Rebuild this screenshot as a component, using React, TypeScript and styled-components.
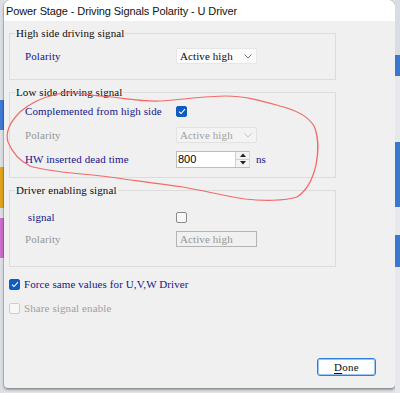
import styled, { createGlobalStyle } from "styled-components";

const GlobalStyle = createGlobalStyle`
  html, body {
    margin: 0;
    padding: 0;
    background: #dfe3e8;
    width: 400px;
    height: 393px;
    overflow: hidden;
  }
`;

const Screen = styled.div`
  position: relative;
  width: 400px;
  height: 393px;
  display: flex;
  background: #e4e6ea;
`;

const SideStrip = styled.div<{ $w: number }>`
  width: ${(p) => p.$w}px;
  flex: none;
  display: flex;
  flex-direction: column;
`;

const StripBit = styled.div<{ $h: number; $c: string }>`
  height: ${(p) => p.$h}px;
  background: ${(p) => p.$c};
  flex: none;
`;

const Dialog = styled.div`
  width: 391px;
  height: 388px;
  flex: none;
  display: flex;
  flex-direction: column;
  background: #f0f0f0;
  border-radius: 7px 7px 4px 4px;
  box-shadow: 0 2px 3px rgba(0, 0, 0, 0.35), 0 0 0 1px rgba(0, 0, 0, 0.12);
  overflow: hidden;
`;

const TitleBar = styled.div`
  height: 21px;
  flex: none;
  background: #ffffff;
  display: flex;
  align-items: center;
  padding-left: 2px;
  font-family: "Liberation Sans", Arial, sans-serif;
  font-size: 11px;
  letter-spacing: -0.1px;
  color: #111;
`;

const Body = styled.div`
  flex: 1;
  display: flex;
  flex-direction: column;
  padding: 6px 0 12px 5px;
  font-family: "Liberation Serif", serif;
  font-size: 11px;
  letter-spacing: 0.1px;
`;

const Group = styled.fieldset<{ $top: number; $bottom: number; $gap: number }>`
  width: 327px;
  box-sizing: border-box;
  margin: 0 0 6px 0;
  padding: ${(p) => p.$top}px 0 ${(p) => p.$bottom}px 15px;
  border: 1px solid #dcdcdc;
  display: flex;
  flex-direction: column;
  gap: ${(p) => p.$gap}px;
  min-width: 0;
`;

const Legend = styled.legend`
  padding: 0 1px;
  margin-left: -10px;
  line-height: 12px;
  color: #0c0c0c;
`;

const Row = styled.div`
  height: 16px;
  display: flex;
  align-items: center;
`;

const Label = styled.span<{ $dim?: boolean }>`
  width: 151px;
  flex: none;
  color: ${(p) => (p.$dim ? "#969696" : "#15158a")};
  white-space: nowrap;
`;

const Combo = styled.div<{ $dim?: boolean }>`
  width: 81px;
  height: 16px;
  box-sizing: border-box;
  display: flex;
  align-items: center;
  justify-content: space-between;
  padding: 0 4px 0 3px;
  background: ${(p) => (p.$dim ? "#f3f3f3" : "#fbfbfb")};
  border: 1px solid ${(p) => (p.$dim ? "#e2e2e2" : "#e6e6e6")};
  border-radius: 2px;
  color: ${(p) => (p.$dim ? "#a0a0a0" : "#0c0c0c")};
`;

const ReadOnlyBox = styled.div`
  width: 81px;
  height: 16px;
  box-sizing: border-box;
  display: flex;
  align-items: center;
  padding-left: 3px;
  background: #f0f0f0;
  border: 1px solid #b4b4b4;
  color: #969696;
`;

const Spin = styled.div`
  width: 74px;
  height: 17px;
  box-sizing: border-box;
  display: flex;
  border: 1px solid #bdbdbd;
  border-right-color: #d8d8d8;
  background: #fff;
`;

const SpinText = styled.div`
  flex: 1;
  display: flex;
  align-items: center;
  padding-left: 1px;
  font-family: "Liberation Sans", sans-serif;
  font-size: 11px;
  letter-spacing: 0;
  color: #000;
`;

const SpinButtons = styled.div`
  width: 13px;
  display: flex;
  flex-direction: column;
  border-left: 1px solid #d0d0d0;
  background: #f4f4f4;
`;

const SpinBtn = styled.div`
  flex: 1;
  display: flex;
  align-items: center;
  justify-content: center;
  & + & {
    border-top: 1px solid #d0d0d0;
  }
`;

const Unit = styled.span`
  margin-left: 6px;
  color: #15158a;
`;

const Box = styled.div<{ $checked?: boolean; $dim?: boolean }>`
  width: 11px;
  height: 11px;
  box-sizing: border-box;
  border-radius: 2px;
  flex: none;
  display: flex;
  align-items: center;
  justify-content: center;
  background: ${(p) => (p.$checked ? "#0f5cbf" : "#f7f7f7")};
  border: 1px solid
    ${(p) => (p.$checked ? "#0f5cbf" : p.$dim ? "#cdcdcd" : "#8a8a8a")};
`;

const CheckRow = styled.div`
  height: 16px;
  display: flex;
  align-items: center;
  gap: 4px;
`;

const CheckText = styled.span<{ $dim?: boolean }>`
  color: ${(p) => (p.$dim ? "#a0a0a0" : "#15158a")};
  white-space: nowrap;
`;

const Options = styled.div`
  margin-top: 3px;
  display: flex;
  flex-direction: column;
  gap: 8px;
`;

const Footer = styled.div`
  margin-top: auto;
  display: flex;
  justify-content: flex-end;
  padding-right: 19px;
`;

const Button = styled.button`
  width: 59px;
  height: 18px;
  box-sizing: border-box;
  border: 1px solid #2f7fd6;
  box-shadow: inset 0 0 0 1px #9cc4ef;
  border-radius: 3px;
  background: #fdfdfd;
  font-family: "Liberation Serif", serif;
  font-size: 11px;
  letter-spacing: 0.3px;
  color: #111;
  padding: 0;
  & u {
    text-underline-offset: 2px;
  }
`;

const Scribble = styled.svg`
  position: absolute;
  left: 0;
  top: 0;
  pointer-events: none;
`;

const Chevron = ({ color }: { color: string }) => (
  <svg width="8" height="5" viewBox="0 0 8 5">
    <path d="M0.5 0.5 L4 4 L7.5 0.5" fill="none" stroke={color} strokeWidth="1" />
  </svg>
);

const Check = () => (
  <svg width="8" height="7" viewBox="0 0 8 7">
    <path d="M1 3.6 L3 5.5 L7 1.2" fill="none" stroke="#fff" strokeWidth="1.1" />
  </svg>
);

const Arrow = ({ up }: { up?: boolean }) => (
  <svg width="6" height="4" viewBox="0 0 6 4">
    <path d={up ? "M0 4 L3 0.5 L6 4 Z" : "M0 0 L3 3.5 L6 0 Z"} fill="#222" />
  </svg>
);

export default function App() {
  return (
    <Screen>
      <GlobalStyle />
      <SideStrip $w={4}>
        <StripBit $h={100} $c="#dcdfe4" />
        <StripBit $h={30} $c="#3d7bd4" />
        <StripBit $h={37} $c="#dcdfe4" />
        <StripBit $h={41} $c="#e0a31a" />
        <StripBit $h={10} $c="#dcdfe4" />
        <StripBit $h={40} $c="#cc6ccc" />
        <StripBit $h={135} $c="#dcdfe4" />
      </SideStrip>
      <Dialog>
        <TitleBar>Power Stage - Driving Signals Polarity - U Driver</TitleBar>
        <Body>
          <Group $top={9} $bottom={15} $gap={8}>
            <Legend>High side driving signal</Legend>
            <Row>
              <Label>Polarity</Label>
              <Combo>
                Active high
                <Chevron color="#777" />
              </Combo>
            </Row>
          </Group>

          <Group $top={5} $bottom={10} $gap={8}>
            <Legend>Low side driving signal</Legend>
            <Row>
              <Label>Complemented from high side</Label>
              <Box $checked>
                <Check />
              </Box>
            </Row>
            <Row>
              <Label $dim>Polarity</Label>
              <Combo $dim>
                Active high
                <Chevron color="#c4c4c4" />
              </Combo>
            </Row>
            <Row>
              <Label>HW inserted dead time</Label>
              <Spin>
                <SpinText>800</SpinText>
                <SpinButtons>
                  <SpinBtn>
                    <Arrow up />
                  </SpinBtn>
                  <SpinBtn>
                    <Arrow />
                  </SpinBtn>
                </SpinButtons>
              </Spin>
              <Unit>ns</Unit>
            </Row>
          </Group>

          <Group $top={13} $bottom={19} $gap={6}>
            <Legend>Driver enabling signal</Legend>
            <Row>
              <Label>&nbsp;signal</Label>
              <Box />
            </Row>
            <Row>
              <Label $dim>Polarity</Label>
              <ReadOnlyBox>Active high</ReadOnlyBox>
            </Row>
          </Group>

          <Options>
            <CheckRow>
              <Box $checked>
                <Check />
              </Box>
              <CheckText>Force same values for U,V,W Driver</CheckText>
            </CheckRow>
            <CheckRow>
              <Box $dim />
              <CheckText $dim>Share signal enable</CheckText>
            </CheckRow>
          </Options>

          <Footer>
            <Button>
              <u>D</u>one
            </Button>
          </Footer>
        </Body>
      </Dialog>
      <SideStrip $w={5}>
        <StripBit $h={55} $c="#d9dde3" />
        <StripBit $h={21} $c="#3a78d0" />
        <StripBit $h={66} $c="#e6e8ec" />
        <StripBit $h={65} $c="#3a78d0" />
        <StripBit $h={28} $c="#e6e8ec" />
        <StripBit $h={32} $c="#3a78d0" />
        <StripBit $h={126} $c="#e6e8ec" />
      </SideStrip>
      <Scribble width="400" height="393" viewBox="0 0 400 393">
        <path
          d="M98 96 C80 93 66 92 58 94 C44 97 30 103 20 112 C10 122 5 132 8 142 C12 152 20 161 30 166 C45 171 70 173 93 175 C120 178 150 183 183 187 C205 191 225 196 245 199 C262 201 285 201 297 197 C308 190 313 178 316 165 C319 150 318 135 314 126 C308 116 296 110 280 106 C262 101 245 96 226 96 C205 96 180 100 160 101 C140 102 120 97 98 96"
          fill="none"
          stroke="#f06a6a"
          strokeWidth="1.2"
        />
      </Scribble>
    </Screen>
  );
}
